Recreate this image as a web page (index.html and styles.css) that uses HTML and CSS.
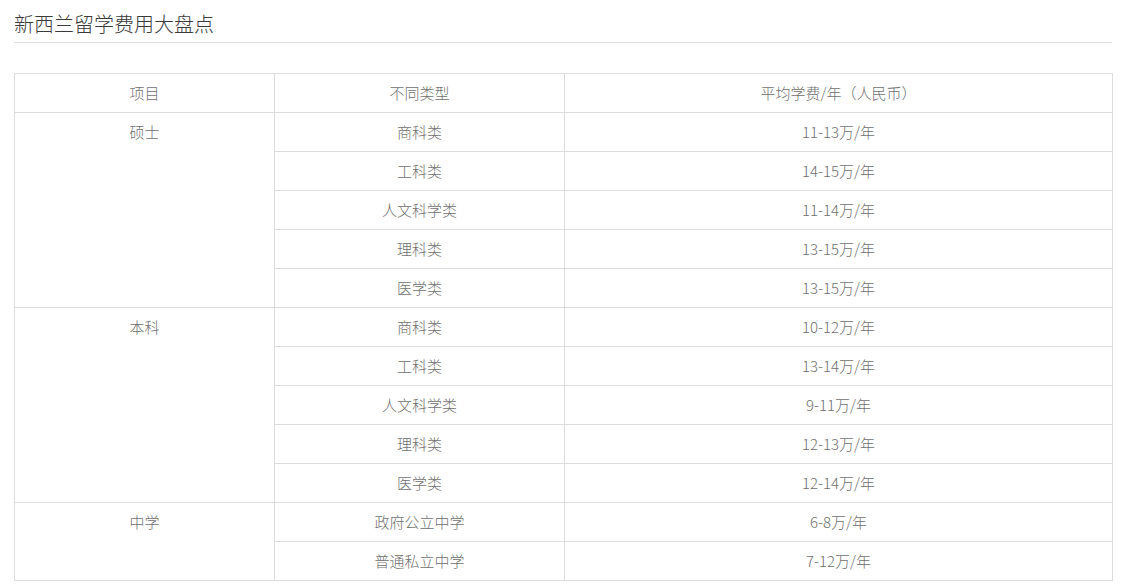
FILE: index.html
```html
<!DOCTYPE html>
<html lang="zh-CN">
<head>
<meta charset="utf-8">
<title>新西兰留学费用大盘点</title>
<link rel="stylesheet" href="styles.css">
</head>
<body>
<div class="page">
  <h2 class="title">新西兰留学费用大盘点</h2>
  <table class="fees">
    <colgroup>
      <col class="c1">
      <col class="c2">
      <col class="c3">
    </colgroup>
    <tr><td>项目</td><td>不同类型</td><td>平均学费/年（人民币）</td></tr>
    <tr><td rowspan="5" class="group">硕士</td><td>商科类</td><td>11-13万/年</td></tr>
    <tr><td>工科类</td><td>14-15万/年</td></tr>
    <tr><td>人文科学类</td><td>11-14万/年</td></tr>
    <tr><td>理科类</td><td>13-15万/年</td></tr>
    <tr><td>医学类</td><td>13-15万/年</td></tr>
    <tr><td rowspan="5" class="group">本科</td><td>商科类</td><td>10-12万/年</td></tr>
    <tr><td>工科类</td><td>13-14万/年</td></tr>
    <tr><td>人文科学类</td><td>9-11万/年</td></tr>
    <tr><td>理科类</td><td>12-13万/年</td></tr>
    <tr><td>医学类</td><td>12-14万/年</td></tr>
    <tr><td rowspan="2" class="group">中学</td><td>政府公立中学</td><td>6-8万/年</td></tr>
    <tr><td>普通私立中学</td><td>7-12万/年</td></tr>
  </table>
</div>
</body>
</html>
```
FILE: styles.css
```css
html, body {
  margin: 0;
  padding: 0;
  background: #fff;
}
.page {
  padding: 9px 15px 0 14px;
  font-family: "Microsoft YaHei", "Noto Sans CJK SC", "Noto Sans", sans-serif;
}
.title {
  margin: 0;
  font-size: 20px;
  font-weight: 300;
  line-height: 30px;
  color: #3a3a3a;
  padding-bottom: 3px;
  border-bottom: 1px solid #ddd;
}
.fees {
  margin-top: 30px;
  width: 1098px;
  border-collapse: collapse;
  table-layout: fixed;
  font-size: 15px;
  font-weight: 300;
  color: #707070;
}
.c1 { width: 260px; }
.c2 { width: 290px; }
.c3 { width: 548px; }
.fees td {
  border: 1px solid #ddd;
  height: 38px;
  padding: 0;
  line-height: 38px;
  text-align: center;
  vertical-align: middle;
}
.fees td.group {
  vertical-align: top;
}
```
